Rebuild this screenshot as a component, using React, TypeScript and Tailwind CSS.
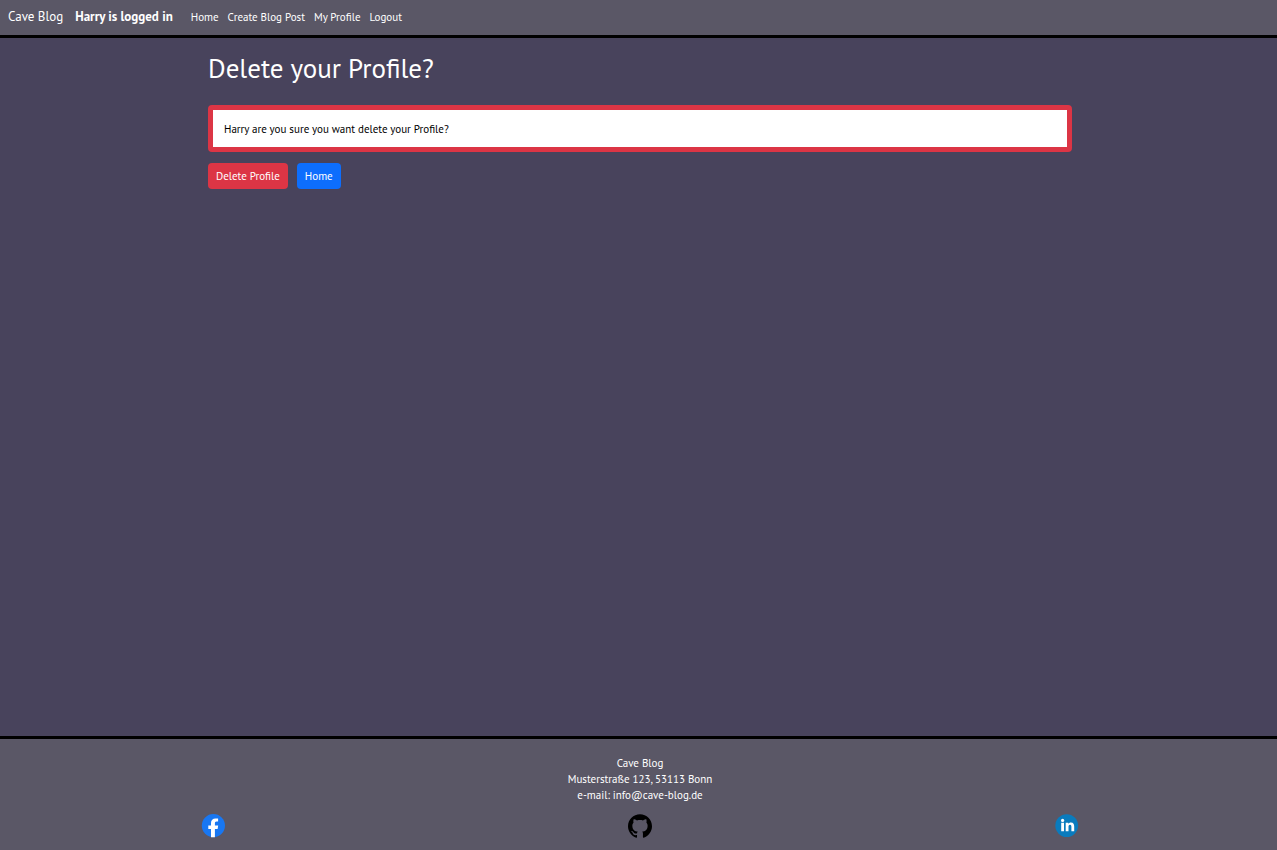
import type { ReactNode } from "react";

const navLinks = ["Home", "Create Blog Post", "My Profile", "Logout"];

function FacebookIcon() {
  return (
    <svg viewBox="0 0 24 24" className="size-6" aria-hidden="true">
      <circle cx="12.4" cy="11.6" r="11.6" fill="#1877f2" />
      <path
        fill="#fff"
        d="M10 23.2v-8.3H7.3v-3.5H10V9c0-3 1.8-4.6 4.5-4.6 1.3 0 2.6.2 2.6.2v3h-1.5c-1.4 0-1.7.9-1.7 1.8v2h3.3l-.6 3.5h-2.7v8.3z"
      />
    </svg>
  );
}

function GithubIcon() {
  return (
    <svg viewBox="0 0 24 24" className="size-6" aria-hidden="true">
      <path
        fill="#000"
        d="M12 .297c-6.63 0-12 5.373-12 12 0 5.303 3.438 9.8 8.205 11.385.6.113.82-.258.82-.577 0-.285-.01-1.04-.015-2.04-3.338.724-4.042-1.61-4.042-1.61C4.422 18.07 3.633 17.7 3.633 17.7c-1.087-.744.084-.729.084-.729 1.205.084 1.838 1.236 1.838 1.236 1.07 1.835 2.809 1.305 3.495.998.108-.776.417-1.305.76-1.605-2.665-.3-5.466-1.332-5.466-5.93 0-1.31.465-2.38 1.235-3.22-.135-.303-.54-1.523.105-3.176 0 0 1.005-.322 3.3 1.23.96-.267 1.98-.399 3-.405 1.02.006 2.04.138 3 .405 2.28-1.552 3.285-1.23 3.285-1.23.645 1.653.24 2.873.12 3.176.765.84 1.23 1.91 1.23 3.22 0 4.61-2.805 5.625-5.475 5.92.42.36.81 1.096.81 2.22 0 1.606-.015 2.896-.015 3.286 0 .315.21.69.825.57C20.565 22.092 24 17.592 24 12.297c0-6.627-5.373-12-12-12"
      />
    </svg>
  );
}

function LinkedinIcon() {
  return (
    <svg viewBox="0 0 24 24" className="size-6" aria-hidden="true">
      <circle cx="11.7" cy="11.6" r="11.4" fill="#0a7bbd" />
      <circle cx="7.6" cy="6.4" r="1.6" fill="#fff" />
      <path
        fill="#fff"
        d="M6.2 8.7H9v8.5H6.2zM10.7 8.7h2.6v1.2c.5-.8 1.4-1.4 2.6-1.4 2.6 0 3.3 1.7 3.3 4v4.7h-2.8V13c0-1.1-.1-2.2-1.4-2.2s-1.5 1.1-1.5 2.2v4.2h-2.8z"
      />
    </svg>
  );
}

function SocialLink({ label, children }: { label: string; children: ReactNode }) {
  return (
    <div className="flex justify-center">
      <a href="#" aria-label={label}>
        {children}
      </a>
    </div>
  );
}

export default function App() {
  return (
    <div className="flex min-h-screen flex-col overflow-x-hidden bg-[#48435c] font-['PT_Sans','Lato',sans-serif] text-[11px] leading-4 text-white">
      <header className="border-b-3 border-black bg-[#5a5766]">
        <nav className="flex items-center px-2 pt-[9px] pb-[10px]">
          <a href="#" className="mr-3 text-[13px] leading-4">
            Cave Blog
          </a>
          <strong className="mr-[18px] text-[13px] leading-4 font-bold">
            Harry is logged in
          </strong>
          <ul className="flex gap-[9px]">
            {navLinks.map((link) => (
              <li key={link}>
                <a href="#">{link}</a>
              </li>
            ))}
          </ul>
        </nav>
      </header>

      <div className="-mr-[3px] flex flex-1 flex-col">
        <main className="mx-auto w-full max-w-[864px] flex-1 pt-[14px]">
          <h1 className="text-[27px] leading-8">Delete your Profile?</h1>
          <p className="mt-[21px] rounded border-5 border-[#dc3545] bg-white px-[11px] pt-[11px] pb-[10px] text-black">
            Harry are you sure you want delete your Profile?
          </p>
          <div className="mt-[11px] flex gap-[9px]">
            <button type="button" className="h-[26px] rounded bg-[#dc3545] px-2">
              Delete Profile
            </button>
            <a href="#" className="flex h-[26px] items-center rounded bg-[#0d6efd] px-2">
              Home
            </a>
          </div>
        </main>

        <footer className="border-t-3 border-black bg-[#5a5766] pt-4 pb-3">
          <address className="text-center not-italic">
            Cave Blog
            <br />
            Musterstraße 123, 53113 Bonn
            <br />
            e-mail: info@cave-blog.de
          </address>
          <div className="mt-[11px] grid grid-cols-3">
            <SocialLink label="Facebook">
              <FacebookIcon />
            </SocialLink>
            <SocialLink label="GitHub">
              <GithubIcon />
            </SocialLink>
            <SocialLink label="LinkedIn">
              <LinkedinIcon />
            </SocialLink>
          </div>
        </footer>
      </div>
    </div>
  );
}
